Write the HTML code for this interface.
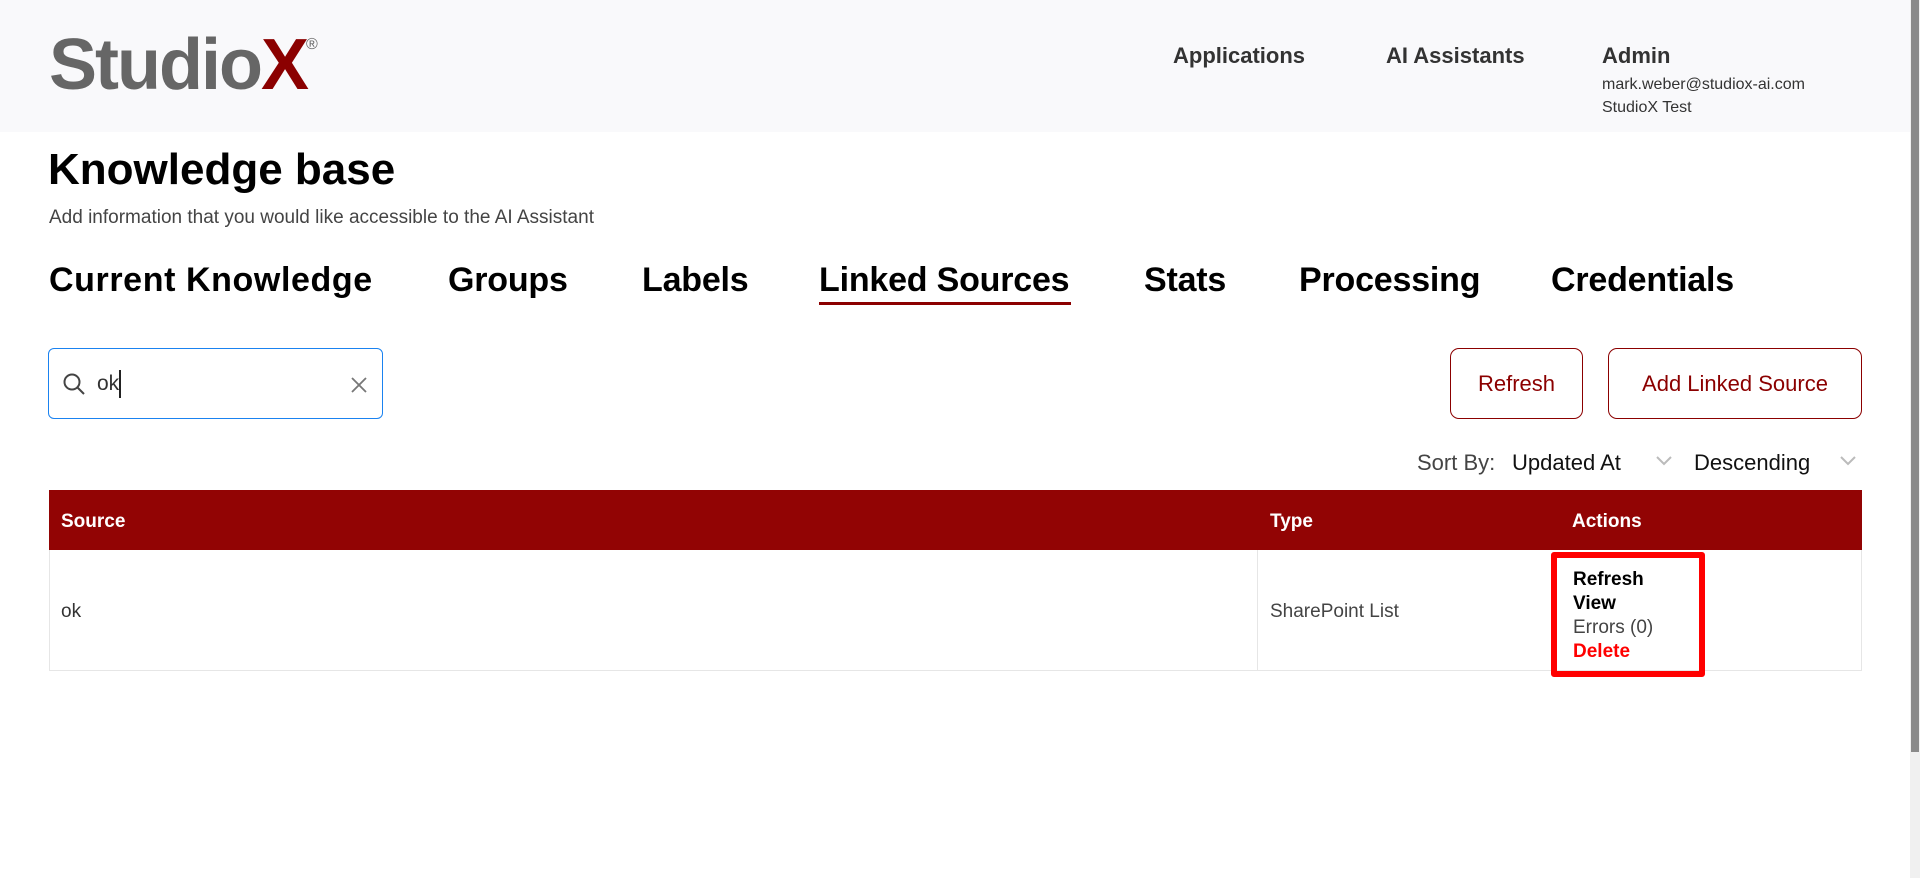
<!DOCTYPE html>
<html><head><meta charset="utf-8"><style>
*{margin:0;padding:0;box-sizing:border-box}
body{width:1920px;height:878px;position:relative;overflow:hidden;background:#fff;font-family:"Liberation Sans",sans-serif;color:#000}
.a{position:absolute;white-space:nowrap}
.hdr{position:absolute;left:0;top:0;width:1910px;height:132px;background:#f9f9fb}
.nav{font-weight:bold;font-size:22px;color:#333;top:43px}
.tab{font-weight:bold;font-size:34px;top:261px;letter-spacing:-0.2px}
.btn{position:absolute;top:348px;height:71px;border:1px solid #8b0000;border-radius:9px;color:#8b0000;font-size:22px;display:flex;align-items:center;justify-content:center}
.act{font-size:19px;left:1573px;line-height:24px}
</style></head><body>
<div class="hdr"></div>
<div class="a" style="left:49px;top:24px;font-size:72px;font-weight:bold;color:#666;letter-spacing:-2px">Studio<span style="color:#8b0000">X</span></div>
<div class="a" style="left:306px;top:36px;font-size:16px;color:#666">®</div>
<div class="a nav" style="left:1173px">Applications</div>
<div class="a nav" style="left:1386px">AI Assistants</div>
<div class="a nav" style="left:1602px">Admin</div>
<div class="a" style="left:1602px;top:76px;font-size:16px;color:#333">mark.weber@studiox-ai.com</div>
<div class="a" style="left:1602px;top:99px;font-size:16px;color:#333">StudioX Test</div>
<div class="a" style="left:48px;top:145px;font-size:44px;font-weight:bold">Knowledge base</div>
<div class="a" style="left:49px;top:207px;font-size:19px;color:#444">Add information that you would like accessible to the AI Assistant</div>
<div class="a tab" style="left:49px;letter-spacing:0.6px">Current Knowledge</div>
<div class="a tab" style="left:448px">Groups</div>
<div class="a tab" style="left:642px">Labels</div>
<div class="a tab" style="left:819px">Linked Sources</div>
<div class="a" style="left:819px;top:302px;width:252px;height:3px;background:#8b0000"></div>
<div class="a tab" style="left:1144px">Stats</div>
<div class="a tab" style="left:1299px">Processing</div>
<div class="a tab" style="left:1551px">Credentials</div>
<div class="a" style="left:48px;top:348px;width:335px;height:71px;border:1px solid #1a82f0;border-radius:6px"></div>
<svg class="a" style="left:62px;top:372px" width="26" height="26" viewBox="0 0 26 26"><circle cx="10" cy="10" r="7.5" fill="none" stroke="#444" stroke-width="2"/><path d="M15.5 15.5L22 22" stroke="#444" stroke-width="2"/></svg>
<div class="a" style="left:97px;top:372px;font-size:21px;color:#333">ok</div>
<div class="a" style="left:119px;top:370px;width:2px;height:28px;background:#222"></div>
<svg class="a" style="left:350px;top:376px" width="18" height="18" viewBox="0 0 18 18"><path d="M2 2L16 16M16 2L2 16" stroke="#777" stroke-width="1.8"/></svg>
<div class="btn" style="left:1450px;width:133px">Refresh</div>
<div class="btn" style="left:1608px;width:254px">Add Linked Source</div>
<div class="a" style="left:1417px;top:450px;font-size:22px;color:#444">Sort By:</div>
<div class="a" style="left:1512px;top:450px;font-size:22px;color:#111">Updated At</div>
<svg class="a" style="left:1655px;top:455px" width="18" height="12" viewBox="0 0 18 12"><path d="M2 2L9 9L16 2" fill="none" stroke="#bbb" stroke-width="2"/></svg>
<div class="a" style="left:1694px;top:450px;font-size:22px;color:#111">Descending</div>
<svg class="a" style="left:1839px;top:455px" width="18" height="12" viewBox="0 0 18 12"><path d="M2 2L9 9L16 2" fill="none" stroke="#bbb" stroke-width="2"/></svg>
<div class="a" style="left:49px;top:490px;width:1813px;height:60px;background:#920404"></div>
<div class="a" style="left:61px;top:511px;font-size:19px;font-weight:bold;color:#fff">Source</div>
<div class="a" style="left:1270px;top:511px;font-size:19px;font-weight:bold;color:#fff">Type</div>
<div class="a" style="left:1572px;top:511px;font-size:19px;font-weight:bold;color:#fff">Actions</div>
<div class="a" style="left:49px;top:550px;width:1813px;height:121px;border:1px solid #e6e6e6;border-top:none"></div>
<div class="a" style="left:1257px;top:550px;width:1px;height:121px;background:#e6e6e6"></div>
<div class="a" style="left:61px;top:601px;font-size:19px;color:#333">ok</div>
<div class="a" style="left:1270px;top:601px;font-size:19px;color:#444">SharePoint List</div>
<div class="a" style="left:1551px;top:552px;width:154px;height:125px;border:6px solid #f00;border-radius:3px"></div>
<div class="a act" style="top:568px;font-weight:bold">Refresh</div>
<div class="a act" style="top:592px;font-weight:bold">View</div>
<div class="a act" style="top:616px;color:#444">Errors (0)</div>
<div class="a act" style="top:640px;color:#f00;font-weight:bold">Delete</div>
<div class="a" style="left:1910px;top:0;width:10px;height:878px;background:#f0f0f0"></div>
<div class="a" style="left:1911px;top:0;width:8px;height:752px;background:#8a8a8a"></div>
</body></html>
